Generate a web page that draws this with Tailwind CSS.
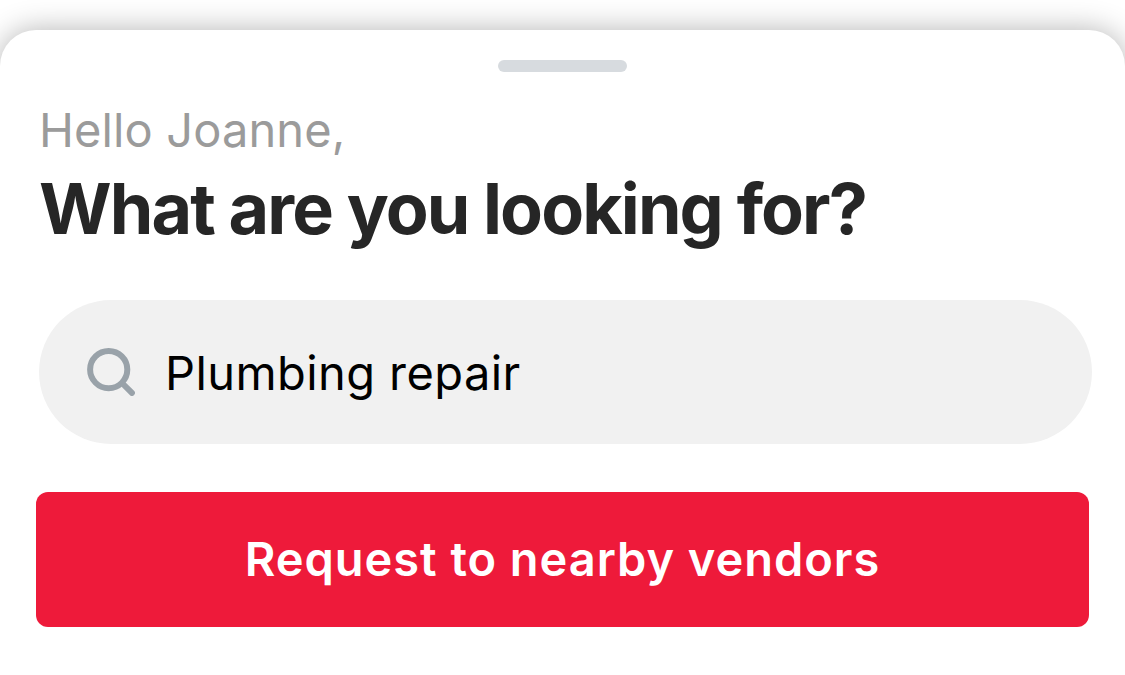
<!DOCTYPE html>
<html lang="en">
<head>
<meta charset="utf-8">
<title>Request a service</title>
<script src="https://cdn.jsdelivr.net/npm/@tailwindcss/browser@4"></script>
</head>
<body class="h-[675px] overflow-hidden bg-white pt-[30px] font-['Inter',sans-serif]">
<main class="flex h-[645px] flex-col rounded-t-[36px] bg-white pt-[30px] shadow-[0_0_30px_rgba(0,0,0,0.3)]">
  <div class="h-3 w-[129px] self-center rounded-full bg-[#d7dbdf]"></div>
  <p class="mt-[29px] ml-[39px] h-[58px] text-[47px] leading-[58px] tracking-[0.12px] whitespace-nowrap text-[#9b9b9b]">Hello Joanne,</p>
  <h1 class="mt-[7px] ml-[39px] h-[86px] text-[70px] leading-[86px] font-bold tracking-[-1.9px] whitespace-nowrap text-[#262626]">What are you looking for?</h1>
  <div class="mt-12 ml-[39px] flex h-36 w-[1053px] items-center rounded-full bg-[#f1f1f1] pl-12">
    <svg class="h-12 w-12" viewBox="0 0 48 48" fill="none" stroke="#99a2a9" stroke-width="6" stroke-linecap="round"><circle cx="21.7" cy="21.6" r="18.6"/><path d="M35.5 35.5l9.4 9.4"/></svg>
    <span class="ml-[30px] pt-0.5 text-[47px] leading-[58px] tracking-[0.42px] whitespace-nowrap text-black">Plumbing repair</span>
  </div>
  <button class="mt-12 ml-9 h-[135px] w-[1053px] rounded-xl bg-[#ee1a3a] pb-px text-[47px] leading-[58px] font-semibold tracking-[0.95px] whitespace-nowrap text-white">Request to nearby vendors</button>
</main>
</body>
</html>
